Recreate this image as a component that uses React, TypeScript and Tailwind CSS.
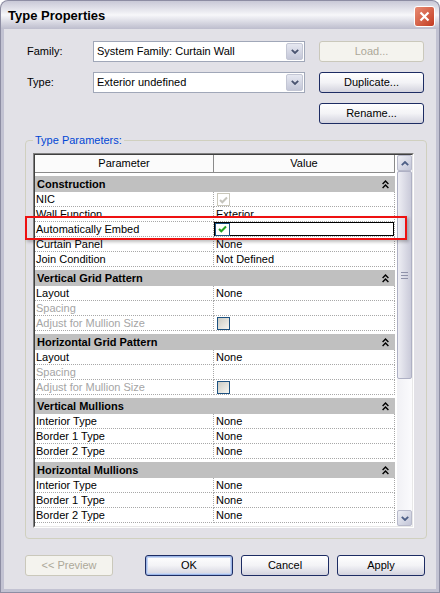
import type { ReactNode } from 'react';

type Value =
  | { kind: 'text'; text: string }
  | { kind: 'none' }
  | { kind: 'nic' }
  | { kind: 'edit' }
  | { kind: 'box' };

type Row = { name: string; value: Value; disabled?: boolean };
type Section = { title: string; rows: Row[] };

const t = (text: string): Value => ({ kind: 'text', text });

const sections: Section[] = [
  {
    title: 'Construction',
    rows: [
      { name: 'NIC', value: { kind: 'nic' } },
      { name: 'Wall Function', value: t('Exterior') },
      { name: 'Automatically Embed', value: { kind: 'edit' } },
      { name: 'Curtain Panel', value: t('None') },
      { name: 'Join Condition', value: t('Not Defined') },
    ],
  },
  {
    title: 'Vertical Grid Pattern',
    rows: [
      { name: 'Layout', value: t('None') },
      { name: 'Spacing', value: { kind: 'none' }, disabled: true },
      { name: 'Adjust for Mullion Size', value: { kind: 'box' }, disabled: true },
    ],
  },
  {
    title: 'Horizontal Grid Pattern',
    rows: [
      { name: 'Layout', value: t('None') },
      { name: 'Spacing', value: { kind: 'none' }, disabled: true },
      { name: 'Adjust for Mullion Size', value: { kind: 'box' }, disabled: true },
    ],
  },
  {
    title: 'Vertical Mullions',
    rows: [
      { name: 'Interior Type', value: t('None') },
      { name: 'Border 1 Type', value: t('None') },
      { name: 'Border 2 Type', value: t('None') },
    ],
  },
  {
    title: 'Horizontal Mullions',
    rows: [
      { name: 'Interior Type', value: t('None') },
      { name: 'Border 1 Type', value: t('None') },
      { name: 'Border 2 Type', value: t('None') },
    ],
  },
];

function Check({ color }: { color: string }) {
  return (
    <svg width="9" height="8" viewBox="0 0 9 8">
      <path d="M1 4 L3.3 6.3 L8 1.5" fill="none" stroke={color} strokeWidth="2" />
    </svg>
  );
}

function Combo({ value }: { value: string }) {
  return (
    <div className="flex h-[21px] w-[212px] items-center border border-[#a0a7b8] bg-white">
      <span className="flex-1 pl-[3px] leading-[19px]">{value}</span>
      <div className="mr-px flex h-[17px] w-[17px] items-center justify-center rounded-[2px] border border-[#c3c6d4] bg-gradient-to-b from-[#e6e8f1] to-[#c4c7d8]">
        <svg width="8" height="5" viewBox="0 0 8 5">
          <path d="M0.8 0.8 L4 4 L7.2 0.8" fill="none" stroke="#4a5470" strokeWidth="1.8" />
        </svg>
      </div>
    </div>
  );
}

function Btn({
  children,
  disabled,
  primary,
  w = 'w-[105px]',
}: {
  children: ReactNode;
  disabled?: boolean;
  primary?: boolean;
  w?: string;
}) {
  if (disabled) {
    return (
      <div
        className={`${w} flex h-[21px] items-center justify-center rounded-[3px] border border-[#cac8bb] bg-[#f4f3ee] text-[#aca899]`}
      >
        {children}
      </div>
    );
  }
  return (
    <div
      className={`${w} flex h-[21px] items-center justify-center rounded-[3px] border border-[#1d2c63] bg-gradient-to-b from-white via-[#f3f3f6] to-[#d3d3de] ${
        primary ? 'shadow-[inset_0_0_0_1px_#9db7e8,inset_0_0_0_2px_#c8d6f2]' : ''
      }`}
    >
      {children}
    </div>
  );
}

function ValueCell({ value }: { value: Value }) {
  if (value.kind === 'text') return <span className="pl-[2px]">{value.text}</span>;
  if (value.kind === 'nic')
    return (
      <div className="ml-[3px] mt-px flex h-[13px] w-[13px] items-center justify-center border border-[#cac8bb] bg-white">
        <Check color="#c5c4bc" />
      </div>
    );
  if (value.kind === 'box')
    return (
      <div className="ml-[3px] mt-px h-[13px] w-[13px] border border-[#1c5180] bg-gradient-to-br from-[#cbcbc3] to-[#f6f6f2]" />
    );
  if (value.kind === 'edit')
    return (
      <div className="flex h-[14px] w-[180px] items-center border border-black bg-white">
        <div className="flex h-[13px] w-[15px] items-center justify-center border border-[#1c5180] bg-white">
          <Check color="#21a121" />
        </div>
      </div>
    );
  return null;
}

function Chevrons() {
  return (
    <svg width="7" height="9" viewBox="0 0 7 9">
      <path d="M0.6 4 L3.5 1.1 L6.4 4 M0.6 8 L3.5 5.1 L6.4 8" fill="none" stroke="#000" strokeWidth="1.4" />
    </svg>
  );
}

function ScrollArrow({ up }: { up?: boolean }) {
  return (
    <div className="flex h-[16px] w-[15px] items-center justify-center rounded-[2px] border border-[#b8bacb] bg-gradient-to-br from-[#eeeff5] to-[#c3c6d8]">
      <svg width="8" height="5" viewBox="0 0 8 5">
        <path
          d={up ? 'M0.8 4.2 L4 1 L7.2 4.2' : 'M0.8 0.8 L4 4 L7.2 0.8'}
          fill="none"
          stroke="#4d5f86"
          strokeWidth="1.8"
        />
      </svg>
    </div>
  );
}

export default function App() {
  return (
    <div className="relative flex h-[593px] w-[440px] flex-col overflow-hidden rounded-t-[8px] bg-[#8d8da3] p-px font-['Liberation_Sans',Arial,sans-serif] text-[11px] text-black">
      {/* Title bar */}
      <div className="flex h-[28px] items-center rounded-t-[7px] bg-gradient-to-b from-[#c9c9d7] via-[#f7f7fa] to-[#bdbdcd] pl-[7px] pr-[4px]">
        <span className="mt-[2px] text-[13px] font-bold">Type Properties</span>
        <div className="ml-auto mt-[3px] flex h-[21px] w-[21px] items-center justify-center rounded-[3px] border border-white bg-gradient-to-br from-[#e88b73] to-[#c2391f]">
          <svg width="11" height="11" viewBox="0 0 11 11">
            <path d="M1.5 1.5 L9.5 9.5 M9.5 1.5 L1.5 9.5" stroke="#fff" strokeWidth="2.2" />
          </svg>
        </div>
      </div>

      {/* Client */}
      <div className="flex flex-1 flex-col border-x-[3px] border-b-[3px] border-[#c2c2d2] bg-[#e2e1e7]">
        <div className="grid grid-cols-[66px_212px_119px] gap-y-[10px] pl-[23px] pt-[12px]">
          <div className="flex items-center">Family:</div>
          <Combo value="System Family: Curtain Wall" />
          <div className="pl-[14px]">
            <Btn disabled>Load...</Btn>
          </div>
          <div className="flex items-center">Type:</div>
          <Combo value="Exterior undefined" />
          <div className="pl-[14px]">
            <Btn>Duplicate...</Btn>
          </div>
          <div />
          <div />
          <div className="pl-[14px]">
            <Btn>Rename...</Btn>
          </div>
        </div>

        <fieldset className="ml-[21px] mr-[9px] mt-[10px] rounded-[4px] border border-[#d0d0bf] pb-[10px] pl-[7px] pr-[12px] pt-[6px]">
          <legend className="px-[2px] leading-[13px] text-[#0046d5]">Type Parameters:</legend>
          <div className="h-[375px] w-[381px] border border-b-white border-l-[#808080] border-r-white border-t-[#808080]">
            <div className="flex h-full border border-b-[#e8e8e8] border-l-[#404040] border-r-[#e8e8e8] border-t-[#404040] bg-white">
              <div className="w-[362px]">
                <div className="grid h-[18px] grid-cols-[179px_181px]">
                  <div className="flex items-center justify-center border-b border-r border-[#8a8a8a] bg-[#fbfbfb]">
                    Parameter
                  </div>
                  <div className="flex items-center justify-center border-b border-r border-[#8a8a8a] bg-[#fbfbfb]">
                    Value
                  </div>
                </div>
                {sections.map((s) => (
                  <div key={s.title} className="pt-[3px]">
                    <div className="flex h-[16px] w-[360px] items-center justify-between bg-[#c0c0c0] pl-[2px] pr-[6px] font-bold">
                      <span>{s.title}</span>
                      <Chevrons />
                    </div>
                    {s.rows.map((r, i) => (
                      <div key={i} className="grid h-[15px] grid-cols-[179px_181px]">
                        <div
                          className={`border-b border-r border-dotted border-[#a8a8a8] pl-px leading-[14px] ${
                            r.disabled ? 'text-[#a5a5a5]' : ''
                          }`}
                        >
                          {r.name}
                        </div>
                        <div className="flex border-b border-r border-dotted border-[#a8a8a8] leading-[14px]">
                          <ValueCell value={r.value} />
                        </div>
                      </div>
                    ))}
                  </div>
                ))}
              </div>

              {/* Scrollbar */}
              <div className="flex w-[15px] flex-col bg-gradient-to-r from-[#f1f1f5] to-[#fbfbfd]">
                <ScrollArrow up />
                <div className="flex h-[208px] w-[15px] flex-col items-center justify-center gap-[2px] rounded-[2px] border border-[#aeb0c4] bg-gradient-to-r from-[#eeeef4] to-[#c9cad9]">
                  <div className="h-px w-[7px] bg-[#8f92aa]" />
                  <div className="h-px w-[7px] bg-[#8f92aa]" />
                  <div className="h-px w-[7px] bg-[#8f92aa]" />
                </div>
                <div className="flex-1" />
                <ScrollArrow />
              </div>
            </div>
          </div>
        </fieldset>

        <div className="mt-[16px] flex items-center pl-[21px] pr-[11px]">
          <Btn disabled w="w-[88px]">
            &lt;&lt; Preview
          </Btn>
          <div className="flex-1" />
          <div className="flex gap-2">
            <Btn primary w="w-[88px]">
              OK
            </Btn>
            <Btn w="w-[88px]">Cancel</Btn>
            <Btn w="w-[88px]">Apply</Btn>
          </div>
        </div>
      </div>

      {/* Highlight annotation */}
      <div className="absolute left-[25px] top-[216px] h-[24px] w-[382px] border-2 border-[#ee1111] shadow-[2px_2px_3px_rgba(0,0,0,0.25)]" />
    </div>
  );
}
